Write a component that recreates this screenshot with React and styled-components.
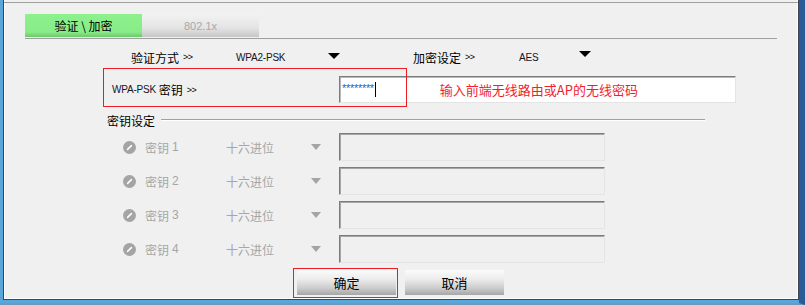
import React from "react";
import styled, { createGlobalStyle } from "styled-components";

const GlobalStyle = createGlobalStyle`
  html, body {
    margin: 0;
    padding: 0;
    background: #6e9ab8;
  }
  body {
    font-family: "Noto Sans CJK SC", "Noto Sans", sans-serif;
    font-size: 12px;
    color: #000;
  }
`;

const Frame = styled.div`
  width: 805px;
  height: 305px;
  box-sizing: border-box;
  display: flex;
  background: #5aa6da;
  padding: 0 0 3px 3px;
  border-right: 6px solid #2b5a98;
  border-bottom: 2px solid #6e9ab8;
`;

const Panel = styled.div`
  flex: 1;
  display: flex;
  flex-direction: column;
  box-sizing: border-box;
  background: #f0f0f0;
  border: 1px solid #3c4652;
  border-top: none;
  box-shadow: inset 1px 0 0 #fff, inset -1px 0 0 #fff, inset 0 -1px 0 #fff;
`;

const Rule = styled.div`
  height: 1px;
  background: #a0a0a0;
  margin: ${(p) => p.$margin || "0"};
  width: ${(p) => p.$width || "auto"};
`;

const TabBar = styled.div`
  display: flex;
  margin: 11px 0 0 21px;
`;

const Tab = styled.div`
  width: 117px;
  height: 23px;
  display: flex;
  align-items: center;
  justify-content: center;
  font-size: ${(p) => (p.$active ? "12px" : "11px")};
  font-family: ${(p) =>
    p.$active
      ? `"Noto Sans CJK SC", sans-serif`
      : `"Liberation Sans", Arial, sans-serif`};
  color: ${(p) => (p.$active ? "#000" : "#a8a8a8")};
  background: ${(p) =>
    p.$active
      ? "linear-gradient(#8cf08c, #88ec88 78%, #6cc86c)"
      : "linear-gradient(#f2f2f2, #e4e4e4 60%, #c6c6c6)"};
`;

const TopRow = styled.div`
  display: flex;
  align-items: center;
  height: 20px;
  margin-top: 8px;
  padding-left: 127px;
`;

const Cell = styled.div`
  width: ${(p) => p.$w}px;
  flex-shrink: 0;
  display: flex;
  align-items: center;
`;

const Chev = styled.span`
  font-family: "Liberation Sans", Arial, sans-serif;
  font-size: 9px;
  margin-left: 4px;
  letter-spacing: -0.5px;
`;

const Value = styled.span`
  font-family: "Liberation Sans", Arial, sans-serif;
  font-size: 10px;
  letter-spacing: -0.2px;
  color: #141428;
`;

const Caret = styled.div`
  width: 0;
  height: 0;
  border-left: ${(p) => p.$size / 2}px solid transparent;
  border-right: ${(p) => p.$size / 2}px solid transparent;
  border-top: ${(p) => Math.round(p.$size / 2)}px solid ${(p) => p.$color || "#000"};
  margin-bottom: ${(p) => p.$lift || 0}px;
`;

const PskRow = styled.div`
  position: relative;
  display: flex;
  align-items: center;
  height: 27px;
  margin-top: 9px;
  padding-left: 108px;
`;

const PskLabel = styled.div`
  width: 227px;
  display: flex;
  align-items: center;
`;

const Mark = styled.div`
  position: absolute;
  box-sizing: border-box;
  border: 1px solid #ec1c24;
  pointer-events: none;
  left: ${(p) => p.$left}px;
  top: ${(p) => p.$top}px;
  width: ${(p) => p.$w}px;
  height: ${(p) => p.$h}px;
`;

const Field = styled.div`
  box-sizing: border-box;
  width: ${(p) => p.$w}px;
  height: ${(p) => p.$h}px;
  display: flex;
  align-items: center;
  padding-left: 2px;
  background: ${(p) => (p.$disabled ? "#f0f0f0" : "#fff")};
  border: 1px solid;
  border-color: #7c7c7c #e4e4e4 #e4e4e4 #7c7c7c;
  box-shadow: inset 1px 1px 0 ${(p) => (p.$disabled ? "#a6a6a6" : "#b8b8b8")};
`;

const Stars = styled.span`
  font-family: "Liberation Sans", Arial, sans-serif;
  font-size: 11px;
  letter-spacing: -0.3px;
  color: #2a5fb8;
  margin-top: -4px;
`;

const Cursor = styled.span`
  width: 1px;
  height: 15px;
  background: #000;
  margin-left: 1px;
`;

const Hint = styled.span`
  margin-left: 64px;
  font-size: 13px;
  color: #f01e2e;
`;

const GroupHead = styled.div`
  display: flex;
  align-items: center;
  height: 14px;
  margin-top: 10px;
  padding-left: 103px;
`;

const GroupLine = styled.div`
  width: 544px;
  height: 1px;
  margin-left: 6px;
  background: #a0a0a0;
  border-bottom: 1px solid #fff;
`;

const KeyList = styled.div`
  display: flex;
  flex-direction: column;
  gap: 6px;
  margin-top: 6px;
  padding-left: 119px;
`;

const KeyRow = styled.div`
  display: flex;
  align-items: center;
  color: #a6a6a6;
`;

const RadioIcon = styled.svg`
  width: 13px;
  height: 13px;
  margin-right: 9px;
  flex-shrink: 0;
`;

const KeyNum = styled.span`
  font-family: "Liberation Sans", Arial, sans-serif;
  font-size: 12px;
  margin-left: 3px;
`;

const ButtonRow = styled.div`
  position: relative;
  display: flex;
  gap: 9px;
  margin-top: 7px;
  margin-left: 293px;
  align-self: flex-start;
`;

const Button = styled.button`
  width: 99px;
  height: 25px;
  padding: 0;
  border: none;
  font-family: "Noto Sans CJK SC", sans-serif;
  font-size: 13px;
  color: #000;
  background: linear-gradient(#fbfbfb, #ededed 35%, #cdcdcd 72%, #a6a6a6);
`;

const Radio = () => (
  <RadioIcon viewBox="0 0 13 13">
    <circle cx="6.5" cy="6.5" r="6.5" fill="#a4a4a4" />
    <line x1="4.6" y1="8.4" x2="8.4" y2="4.6" stroke="#fff" strokeWidth="1.5" strokeLinecap="round" />
  </RadioIcon>
);

const keys = [1, 2, 3, 4];

export default function App() {
  return (
    <>
      <GlobalStyle />
      <Frame>
        <Panel>
          <Rule $margin="2px 0 0 0" />
          <TabBar>
            <Tab $active>验证 \ 加密</Tab>
            <Tab>802.1x</Tab>
          </TabBar>
          <Rule $margin="1px 0 0 21px" $width="752px" />

          <TopRow>
            <Cell $w={105}>
              验证方式<Chev>&gt;&gt;</Chev>
            </Cell>
            <Cell $w={92}>
              <Value>WPA2-PSK</Value>
            </Cell>
            <Cell $w={85}>
              <Caret $size={12} $lift={3} />
            </Cell>
            <Cell $w={106}>
              加密设定<Chev>&gt;&gt;</Chev>
            </Cell>
            <Cell $w={60}>
              <Value>AES</Value>
            </Cell>
            <Cell $w={20}>
              <Caret $size={12} $lift={7} />
            </Cell>
          </TopRow>

          <PskRow>
            <PskLabel>
              <Value>WPA-PSK</Value>&nbsp;密钥<Chev>&gt;&gt;</Chev>
            </PskLabel>
            <Field $w={397} $h={27}>
              <Stars>********</Stars>
              <Cursor />
              <Hint>输入前端无线路由或AP的无线密码</Hint>
            </Field>
            <Mark $left={99} $top={-8} $w={304} $h={39} />
          </PskRow>

          <GroupHead>
            密钥设定
            <GroupLine />
          </GroupHead>

          <KeyList>
            {keys.map((k) => (
              <KeyRow key={k}>
                <Radio />
                <Cell $w={81}>
                  密钥<KeyNum>{k}</KeyNum>
                </Cell>
                <Cell $w={85}>十六进位</Cell>
                <Cell $w={28}>
                  <Caret $size={11} $color="#a4a4a4" />
                </Cell>
                <Field $w={266} $h={28} $disabled />
              </KeyRow>
            ))}
          </KeyList>

          <ButtonRow>
            <Button>确定</Button>
            <Button>取消</Button>
            <Mark $left={-4} $top={-2} $w={105} $h={30} />
          </ButtonRow>
        </Panel>
      </Frame>
    </>
  );
}
